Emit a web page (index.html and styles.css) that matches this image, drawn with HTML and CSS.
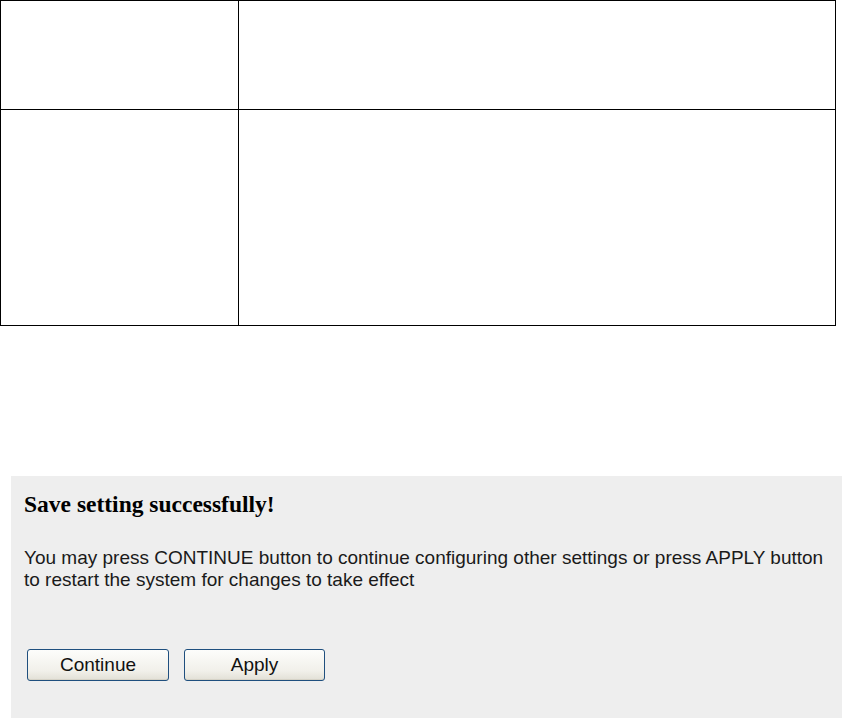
FILE: index.html
```html
<!DOCTYPE html>
<html lang="en">
<head>
<meta charset="utf-8">
<title>Save setting</title>
<link rel="stylesheet" href="styles.css">
</head>
<body>
<div class="grid">
  <div class="cell"></div>
  <div class="cell"></div>
  <div class="cell"></div>
  <div class="cell"></div>
</div>
<div class="panel">
  <h1 class="title">Save setting successfully!</h1>
  <p class="message">You may press CONTINUE button to continue configuring other settings or press APPLY button<br>to restart the system for changes to take effect</p>
  <div class="actions">
    <button class="btn btn-continue" type="button">Continue</button>
    <button class="btn btn-apply" type="button">Apply</button>
  </div>
</div>
</body>
</html>
```
FILE: styles.css
```css
html, body {
  margin: 0;
  padding: 0;
  background: #ffffff;
}

body {
  width: 842px;
  height: 718px;
  overflow: hidden;
}

.grid {
  display: grid;
  grid-template-columns: 238px 597px;
  grid-template-rows: 109px 216px;
  width: max-content;
  border-top: 1px solid #000;
  border-left: 1px solid #000;
}

.cell {
  box-sizing: border-box;
  border-right: 1px solid #000;
  border-bottom: 1px solid #000;
}

.panel {
  box-sizing: border-box;
  margin: 150px 0 0 11px;
  height: 242px;
  padding: 14px 0 0 13px;
  background: #eeeeee;
}

.title {
  margin: 0;
  font-family: "Liberation Serif", "Times New Roman", serif;
  font-weight: bold;
  font-size: 23.5px;
  line-height: 28px;
  color: #000;
}

.message {
  margin: 29px 0 0 0;
  font-family: "Liberation Sans", Arial, sans-serif;
  font-size: 19px;
  line-height: 22px;
  color: #1a1a1a;
  white-space: nowrap;
}

.actions {
  display: flex;
  gap: 15px;
  margin: 58px 0 0 3px;
}

.btn {
  box-sizing: border-box;
  height: 32px;
  padding: 0;
  border: 1px solid #1f4f7e;
  border-radius: 3px;
  background: linear-gradient(#fdfdfb, #f1f0ea 70%, #e2e0d6);
  box-shadow: inset 0 -1px 0 #d6d3c7;
  font-family: "Liberation Sans", Arial, sans-serif;
  font-size: 19px;
  color: #111;
}

.btn-continue {
  width: 142px;
}

.btn-apply {
  width: 141px;
}
```
